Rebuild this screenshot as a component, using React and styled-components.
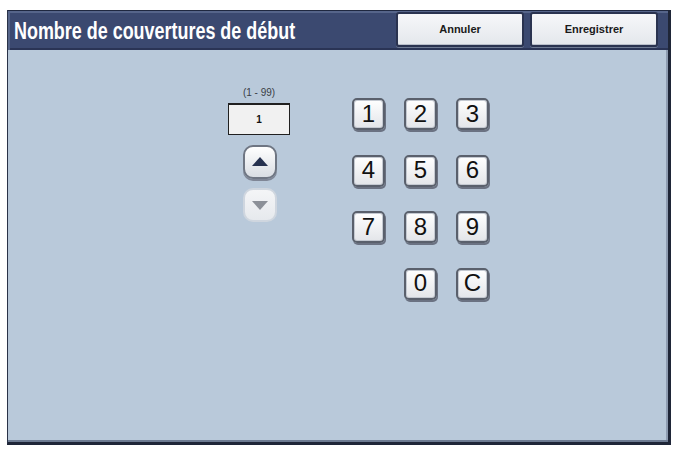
import styled, { createGlobalStyle } from 'styled-components';

const Global = createGlobalStyle`
  html, body {
    margin: 0;
    padding: 0;
    background: #ffffff;
  }
  body {
    font-family: "Liberation Sans", Arial, sans-serif;
  }
`;

const keys = ['1', '2', '3', '4', '5', '6', '7', '8', '9', null, '0', 'C'];

export default function App() {
  return (
    <>
      <Global />
      <Page>
        <Panel>
          <Header>
            <Title>Nombre de couvertures de début</Title>
            <Actions>
              <HeaderButton>Annuler</HeaderButton>
              <HeaderButton>Enregistrer</HeaderButton>
            </Actions>
          </Header>
          <Body>
            <Counter>
              <Range>(1 - 99)</Range>
              <ValueBox>1</ValueBox>
              <ArrowButton aria-label="plus">
                <svg width="16" height="10" viewBox="0 0 16 10">
                  <polygon points="8,0 16,9 0,9" fill="#26314f" />
                </svg>
              </ArrowButton>
              <ArrowButton disabled aria-label="moins">
                <svg width="16" height="10" viewBox="0 0 16 10">
                  <polygon points="0,1 16,1 8,10" fill="#8c9098" />
                </svg>
              </ArrowButton>
            </Counter>
            <Keypad>
              {keys.map((k, i) =>
                k ? <Key key={i}>{k}</Key> : <span key={i} />
              )}
            </Keypad>
          </Body>
        </Panel>
      </Page>
    </>
  );
}

const Page = styled.div`
  width: 674px;
  height: 451px;
  padding: 10px 3px 6px 7px;
  box-sizing: border-box;
`;

const Panel = styled.div`
  width: 664px;
  height: 435px;
  box-sizing: border-box;
  display: flex;
  flex-direction: column;
  background: #b9c9da;
  border-left: 1px solid #2a3348;
  border-right: 3px solid #1f2638;
  border-bottom: 3px solid #1f2638;
  box-shadow: inset 0 -2px 0 #6d7b92, inset -2px 0 0 #8e9cb1;
`;

const Header = styled.div`
  height: 40px;
  box-sizing: border-box;
  display: flex;
  align-items: center;
  justify-content: space-between;
  padding: 0 10px 0 6px;
  background: #3b4970;
  border-top: 1px solid #1f2840;
  box-shadow: inset 2px 2px 0 #56658a, inset 0 -2px 0 #2a3455;
`;

const Title = styled.div`
  color: #ffffff;
  font-family: "Liberation Sans", Arial, sans-serif;
  font-weight: bold;
  font-size: 23px;
  white-space: nowrap;
  transform: scaleX(0.78);
  transform-origin: left center;
  margin-top: 1px;
`;

const Actions = styled.div`
  display: flex;
  gap: 6px;
  margin-top: -3px;
`;

const HeaderButton = styled.button`
  width: 128px;
  height: 35px;
  box-sizing: border-box;
  border: 2px solid #2a3350;
  border-radius: 3px;
  background: linear-gradient(#f6f7f9, #e4e7ec);
  box-shadow: inset 0 -1px 0 #b9bfca, 0 1px 0 #6e7a93;
  font-family: "Liberation Sans", Arial, sans-serif;
  font-weight: bold;
  font-size: 11px;
  color: #1a1a1a;
  padding: 0;
`;

const Body = styled.div`
  flex: 1;
  display: flex;
  align-items: flex-start;
  padding: 36px 0 0 220px;
`;

const Counter = styled.div`
  width: 62px;
  display: flex;
  flex-direction: column;
  align-items: center;
`;

const Range = styled.div`
  font-size: 10px;
  color: #3a3e46;
  height: 13px;
  line-height: 13px;
  margin-bottom: 4px;
`;

const ValueBox = styled.div`
  width: 62px;
  height: 32px;
  box-sizing: border-box;
  border: 1px solid #202020;
  border-top-width: 2px;
  background: #f1f1f1;
  display: flex;
  align-items: center;
  justify-content: center;
  font-size: 10px;
  font-weight: bold;
  color: #111;
  margin-bottom: 10px;
`;

const ArrowButton = styled.button`
  width: 34px;
  height: 34px;
  box-sizing: border-box;
  margin-left: 2px;
  margin-bottom: 9px;
  padding: 0;
  border-radius: 10px;
  display: flex;
  align-items: center;
  justify-content: center;
  border: 2px solid ${(p) => (p.disabled ? '#cfd6df' : '#6f7683')};
  background: ${(p) =>
    p.disabled ? 'linear-gradient(#f4f5f7, #e6e9ed)' : 'linear-gradient(#ffffff, #d9dde3)'};
  box-shadow: ${(p) => (p.disabled ? 'none' : '0 2px 0 #7f8696')};
`;

const Keypad = styled.div`
  display: grid;
  grid-template-columns: repeat(3, 33px);
  grid-auto-rows: 32px;
  column-gap: 19px;
  row-gap: 24.5px;
  margin: 12px 0 0 62px;
`;

const Key = styled.button`
  box-sizing: border-box;
  padding: 0 0 1px;
  border: 2px solid #5a606c;
  border-radius: 5px;
  background: linear-gradient(#ffffff, #e3e5e9);
  box-shadow: inset 0 0 0 1px #c4c9d1, 1px 2px 0 #6b7282;
  font-family: "Liberation Sans", Arial, sans-serif;
  font-size: 24px;
  line-height: 1;
  color: #111;
  display: flex;
  align-items: center;
  justify-content: center;
`;
